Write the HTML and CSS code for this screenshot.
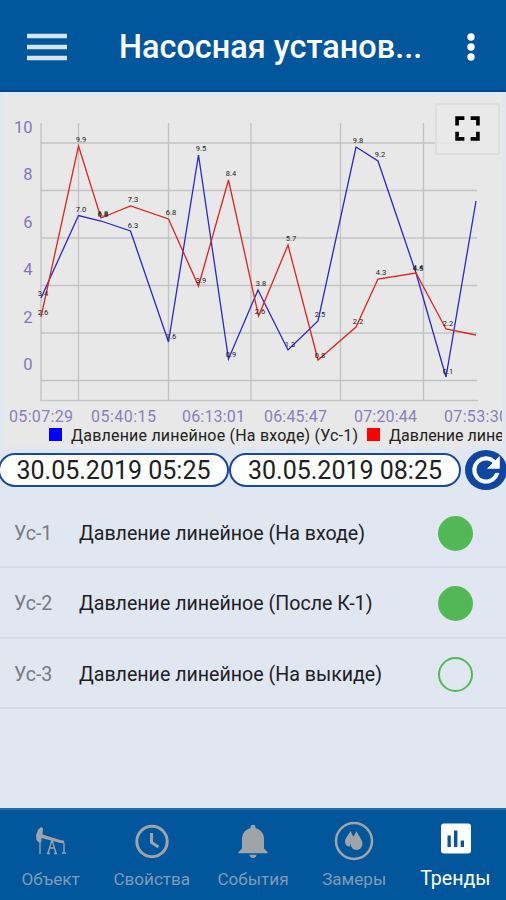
FILE: index.html
```html
<!DOCTYPE html>
<html lang="ru">
<head>
<meta charset="utf-8">
<meta name="viewport" content="width=device-width">
<title>Тренды</title>
<link rel="stylesheet" href="styles.css">
</head>
<body>
<div class="app">
  <header class="topbar">
    <svg class="menu" viewBox="0 0 40 28"><path d="M0 3h40M0 14h40M0 25h40"/></svg>
    <h1 class="title">Насосная установ...</h1>
    <svg class="more" viewBox="0 0 8 28"><circle cx="4" cy="4" r="3.7"/><circle cx="4" cy="14" r="3.7"/><circle cx="4" cy="24" r="3.7"/></svg>
  </header>
  <section class="chart">
    <svg class="plot" viewBox="4 97 498 350">
      <path class="grid" d="M41 143H477M41 190.5H477M41 238H477M41 285.5H477M41 333H477M41 380.5H477M78.5 123V400M168.500 123V400M251 123V400M340.500 123V400M423.500 123V400"/>
      <path class="axis" d="M41 123V400.500H478"/>
      <polyline class="line blue" points="41,298 78.500,215.500 101,221 130.500,231 168.500,342 198.500,155 228.500,359 258,290 288,350 318,321 356,147 378,161 416,273 446,377 476,201"/>
      <polyline class="line red" points="41,317 78.500,146 101,218 130.500,206 168.500,219 198.500,286 228.500,180 258.500,316 288,245 318,360 356,327 378,279 416,273 446,329 476,335"/>
      <g class="values">
        <text x="43" y="296">3.4</text><text x="43" y="315">2.6</text>
        <text x="81" y="142">9.9</text><text x="81" y="212">7.0</text>
        <text x="103" y="217">6.8</text><text x="103" y="216">6.8</text>
        <text x="133" y="202">7.3</text><text x="133" y="228">6.3</text>
        <text x="171" y="215">6.8</text><text x="171" y="339">1.6</text>
        <text x="201" y="151">9.5</text><text x="201" y="283">3.9</text>
        <text x="231" y="176">8.4</text><text x="231" y="357">0.9</text>
        <text x="261" y="286">3.8</text><text x="260" y="314">2.6</text>
        <text x="291" y="241">5.7</text><text x="290" y="347">1.3</text>
        <text x="320" y="317">2.5</text><text x="320" y="358">0.8</text>
        <text x="358" y="143">9.8</text><text x="358" y="324">2.2</text>
        <text x="380" y="157">9.2</text><text x="381" y="275">4.3</text>
        <text x="418" y="271">4.5</text><text x="418" y="270">4.4</text>
        <text x="448" y="326">2.2</text><text x="448" y="374">0.1</text>
      </g>
      <g class="ylabels">
        <text x="32.500" y="132.500">10</text><text x="32.500" y="180">8</text><text x="32.500" y="227.500">6</text>
        <text x="32.500" y="275">4</text><text x="32.500" y="322.500">2</text><text x="32.500" y="370">0</text>
      </g>
      <g class="xlabels">
        <text x="9" y="422" textLength="64">05:07:29</text><text x="91" y="422" textLength="65">05:40:15</text>
        <text x="182" y="422" textLength="63">06:13:01</text><text x="264" y="422" textLength="63">06:45:47</text>
        <text x="354" y="422" textLength="63">07:20:44</text><text x="444" y="422" textLength="64">07:53:30</text>
      </g>
      <rect x="49" y="428" width="13" height="13" fill="#0000ff"/>
      <rect x="367" y="428" width="13" height="13" fill="#ff0000"/>
      <g class="legend">
        <text x="71" y="440.500" textLength="287">Давление линейное (На входе) (Ус-1)</text>
        <text x="389" y="440.500">Давление линейное</text>
      </g>
    </svg>
    <button class="expand" aria-label="Во весь экран"><svg viewBox="0 0 24 24"><path d="M2 9V2h7M15 2h7v7M22 15v7h-7M9 22H2v-7"/></svg></button>
  </section>
  <div class="period">
    <div class="date">30.05.2019 05:25</div>
    <div class="date">30.05.2019 08:25</div>
    <button class="refresh" aria-label="Обновить"><svg viewBox="0 0 24 24"><path d="M17.650 6.350A7.958 7.958 0 0 0 12 4a8 8 0 1 0 7.730 10h-2.080A6 6 0 1 1 12 6c1.660 0 3.140.690 4.220 1.780L13 11h7V4z"/></svg></button>
  </div>
  <ul class="list">
    <li><span class="code">Ус-1</span><span class="name">Давление линейное (На входе)</span><i class="dot on"></i></li>
    <li><span class="code">Ус-2</span><span class="name">Давление линейное (После К-1)</span><i class="dot on"></i></li>
    <li><span class="code">Ус-3</span><span class="name">Давление линейное (На выкиде)</span><i class="dot"></i></li>
  </ul>
  <nav class="tabs">
    <a class="tab"><svg viewBox="0 0 40 40"><path class="fill" d="M10.500 6l-3 2-2.500 6 .5 5 3 3 2-1.500V17l17 4.500 5 1 1-2.500-6-1.500-16-5 .5-6z"/><path class="fine" d="M9 20v13M33 22v9M31 32h4M21 19l-4 13M21 19l4 13M18.500 27h5M16 32.500h3M23 32.500h3"/></svg><span>Объект</span></a>
    <a class="tab"><svg viewBox="0 0 40 40"><circle class="stroke" cx="20" cy="20.500" r="15.200"/><path class="stroke" d="M19.500 12v9.500l7 4.500"/></svg><span>Свойства</span></a>
    <a class="tab"><svg viewBox="0 0 40 40"><path class="fill" d="M20 37c2 0 3.500-1.500 3.500-3.200h-7c0 1.700 1.500 3.200 3.500 3.200zM31 27.500V18c0-5.500-3.200-9.500-8.500-10.700V6.200a2.500 2.500 0 0 0-5 0v1.100C12.200 8.500 9 12.500 9 18v9.500L5.500 31v1.300h29V31z"/></svg><span>События</span></a>
    <a class="tab"><svg viewBox="0 0 40 40"><circle class="ring" cx="20" cy="20" r="18"/><path class="fill" d="M16.500 10c-2 4-5.500 7-5.500 10.500 0 3 2 5 4.800 5 .2-4 2.200-6.500 3.700-9.500zM22.500 10c-2 5-6 8.500-6 13a6 6 0 0 0 12 0c0-4.500-4-8-6-13z"/></svg><span>Замеры</span></a>
    <a class="tab active"><svg viewBox="0 0 40 40"><path class="fill" fill-rule="evenodd" d="M9 2.500h24a3 3 0 0 1 3 3v24a3 3 0 0 1-3 3H9a3 3 0 0 1-3-3v-24a3 3 0 0 1 3-3zM12.500 14.500V26h3.300V14.500zM19 9.500V26h3.400V9.500zM25.700 19.500V26H29v-6.500z"/></svg><span>Тренды</span></a>
  </nav>
</div>
</body>
</html>
```
FILE: styles.css
```css
* { box-sizing: border-box; }
body { margin: 0; font-family: Roboto, "Liberation Sans", sans-serif; }
button { padding: 0; border: 0; }
svg { display: block; }
.app { width: 506px; height: 900px; display: flex; flex-direction: column; overflow: hidden; background: #e1e7f0; }

.topbar { flex: none; height: 92px; padding: 4px 31px 0 27px; display: flex; align-items: center; background: #02569b; border-bottom: 2px solid #004a8c; }
.menu { width: 40px; height: 28px; stroke: #d5e5f5; stroke-width: 4.500; }
.title { margin: 0 0 0 52px; flex: 1; font-size: 32.450px; font-weight: 500; line-height: 40px; color: #fff; white-space: nowrap; }
.more { width: 8px; height: 28px; fill: #fff; }

.chart { flex: none; position: relative; height: 355px; margin: 0 4px; padding-top: 5px; background: #e8e8e8; border-top: 4px solid #deebf6; }
.plot { width: 498px; height: 350px; margin-top: -4px; overflow: hidden; }
.grid { fill: none; stroke: #c3c3c3; stroke-width: 1.300; }
.axis { fill: none; stroke: #c3c6c5; stroke-width: 1.500; }
.line { fill: none; stroke-width: 1.300; }
.blue { stroke: #2a27c9; }
.red { stroke: #dd2420; }
.values { font-size: 7.500px; text-anchor: middle; fill: #222; }
.ylabels { font-size: 16.500px; text-anchor: end; fill: #8078bd; }
.xlabels { font-size: 16px; fill: #8980ba; }
.legend { font-size: 16px; fill: #222; }
.expand { position: absolute; top: 7px; right: 2px; width: 65px; height: 52px; display: grid; place-items: center; background: #e8e8e8cc; border: 2px solid #dedede; border-radius: 3px; }
.expand svg { width: 25px; height: 25px; margin-top: -2px; fill: none; stroke: #000; stroke-width: 3.500; }

.period { flex: none; height: 49px; display: flex; align-items: center; padding-bottom: 4px; }
.date { flex: none; width: 232px; height: 34px; border: 2px solid #174a9c; border-radius: 17px; background: #fff; color: #202020; font-size: 25px; line-height: 32px; text-align: center; white-space: nowrap; }
.date:first-child { width: 231px; margin-left: -2px; }
.refresh { flex: none; width: 42px; height: 40px; margin-left: 4px; border-radius: 50%; background: #0d47a1; display: grid; place-items: center; }
.refresh svg { width: 40px; height: 40px; fill: #fff; stroke: #fff; stroke-width: .500; }

.list { flex: 1; margin: 0; padding: 2px 0 0; list-style: none; }
.list li { height: 70.300px; display: flex; align-items: center; padding: 3px 33px 0 14px; border-bottom: 2px solid #d5dce5; font-size: 19.600px; }
.code { width: 65px; color: #777b83; }
.name { flex: 1; color: #1d2026; white-space: nowrap; }
.dot { width: 35px; height: 35px; border: 2px solid #55b95a; border-radius: 50%; }
.on { background: #52b856; }

.tabs { flex: none; height: 92px; display: grid; grid-template-columns: repeat(5, 1fr); background: #02569b; border-top: 2px solid #2a68a4; }
.tab { display: flex; flex-direction: column; align-items: center; padding-top: 11px; color: #7f9cb6; font-size: 18px; letter-spacing: -.1px; }
.tab:not(.active) { font-size: 17.100px; letter-spacing: 0; }
.tab svg { width: 40px; height: 40px; color: #a0a4a8; }
.tab span { margin-top: 6px; line-height: 24px; white-space: nowrap; }
.active, .tab.active svg { color: #fff; }
.tab.active { font-size: 19.600px; letter-spacing: 0; }
.fill { fill: currentColor; }
.stroke, .ring, .fine { fill: none; stroke: currentColor; stroke-width: 3; }
.ring { stroke-width: 2.500; }
.fine { stroke-width: 1.300; }
```
